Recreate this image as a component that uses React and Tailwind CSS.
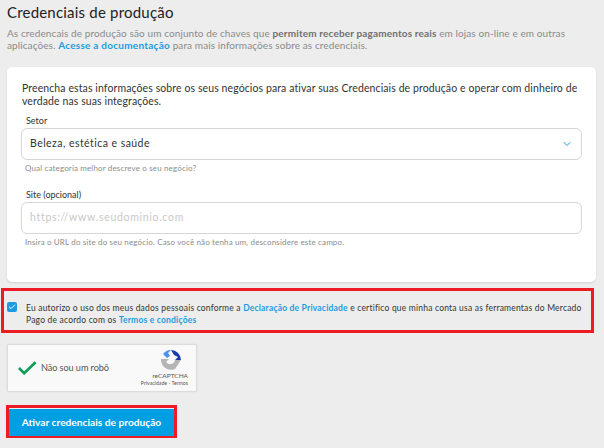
import React from 'react';
import { ChevronDown, Check } from 'lucide-react';

const font = 'font-["Lato",sans-serif]';

const Field = ({ label, hint, children }) => (
  <div>
    <div className="text-[9px] leading-[12px] text-[#333] pl-[5px]">{label}</div>
    <div className="mt-[1px] h-[32px] rounded-[6px] border border-[#d6d6d6] bg-white flex items-center justify-between pl-2 pr-2 text-[10.5px]">
      {children}
    </div>
    <div className="mt-[2px] pl-[4px] text-[8px] leading-[12px] text-[#8c8c8c] tracking-[0.15px]">{hint}</div>
  </div>
);

const Captcha = () => (
  <div className="w-[190px] h-[48px] ml-[7px] mt-[11px] bg-[#f9f9f9] border border-[#dcdcdc] rounded-[2px] shadow-[0_0_2px_rgba(0,0,0,0.1)] flex items-center justify-between pl-[10px] pr-[8px]">
    <div className="flex items-center gap-[4px]">
      <svg width="19" height="14" viewBox="0 0 20 14">
        <path d="M1 7 L6.5 12.5 L18.5 1" fill="none" stroke="#0f9d58" strokeWidth="2.8" />
      </svg>
      <span className="text-[9.2px] tracking-[-0.1px] text-[#555]">Não sou um robô</span>
    </div>
    <div className="flex flex-col items-end">
      <svg width="20" height="20" viewBox="0 0 20 20" className="mr-[7px]">
        <path d="M10 0 A10 10 0 0 1 20 10 L14 10 L17 7 L13 5 Z" fill="#1c3aa9" />
        <path d="M10 0 A10 10 0 0 0 2 4 L6 8 L9 6 L7 3 Z" fill="#4a90f5" />
        <path d="M0 10 A10 10 0 0 0 14 19 L20 10 L14 10 A5 5 0 0 1 5 12 L8 9 L0 9 Z" fill="#b5b5b5" />
      </svg>
      <span className="text-[6.5px] leading-[9px] mt-[1px] text-[#555]">reCAPTCHA</span>
      <span className="text-[5.2px] leading-[7px] text-[#555]">Privacidade - Termos</span>
    </div>
  </div>
);

export default function App() {
  return (
    <div className={`w-[604px] h-[448px] bg-[#ededed] overflow-hidden ${font}`}>
      <div className="pl-[7px] pt-[2px]">
        <h1 className="text-[15px] leading-[20px] text-[#222] tracking-[0.2px]">Credenciais de produção</h1>
        <p className="mt-[5px] text-[10px] leading-[12px] text-[#8a8a8a] tracking-[0.1px] w-[580px]">
          As credencais de produção são um conjunto de chaves que <b className="text-[#707070] tracking-[0.15px]">permitem receber pagamentos reais</b> em lojas on-line e em outras aplicações. <a className="text-[#1d9be0] font-bold tracking-[0.25px]">Acesse a documentação</a> para mais informações sobre as credenciais.
        </p>
      </div>

      <div className="ml-[7px] mt-[16px] w-[589px] h-[215px] bg-white rounded-[5px] shadow-[0_1px_2px_rgba(0,0,0,0.12)] pt-[15px] pl-[14px] pr-[14px]">
        <p className="text-[10.5px] leading-[13px] text-[#333] pl-[1px] tracking-[0.1px]">
          Preencha estas informações sobre os seus negócios para ativar suas Credenciais de produção e operar com dinheiro de verdade nas suas integrações.
        </p>
        <div className="mt-[7px]">
          <Field label="Setor" hint="Qual categoria melhor descreve o seu negócio?">
            <span className="text-[#333] tracking-[0.45px]">Beleza, estética e saúde</span>
            <ChevronDown size={12} className="text-[#1d9be0]" />
          </Field>
        </div>
        <div className="mt-[15px]">
          <Field label="Site (opcional)" hint="Insira o URL do site do seu negócio. Caso você não tenha um, desconsidere este campo.">
            <span className="text-[#c8c8c8] tracking-[0.7px]">https://www.seudominio.com</span>
          </Field>
        </div>
      </div>

      <div className="ml-[1px] mt-[6px] w-[593px] h-[45px] border-[3px] border-[#ed1c24] flex items-start pl-[3px] pt-[11px]">
        <span className="shrink-0 w-[10px] h-[10px] rounded-[2px] bg-[#1d9be0] flex items-center justify-center">
          <Check size={8} strokeWidth={3} className="text-white" />
        </span>
        <p className="ml-[9px] text-[8.5px] leading-[12px] text-[#333] tracking-[0.2px]">
          Eu autorizo o uso dos meus dados pessoais conforme a <a className="text-[#1d9be0] font-bold">Declaração de Privacidade</a> e certifico que minha conta usa as ferramentas do Mercado Pago de acordo com os <a className="text-[#1d9be0] font-bold">Termos e condições</a>
        </p>
      </div>

      <Captcha />

      <div className="ml-[6px] mt-[13px] w-[171px] h-[33px] border-[3px] border-[#ed1c24]">
        <button className="w-full h-full bg-[#009ee3] text-white text-[10.2px] font-bold">Ativar credenciais de produção</button>
      </div>
    </div>
  );
}
